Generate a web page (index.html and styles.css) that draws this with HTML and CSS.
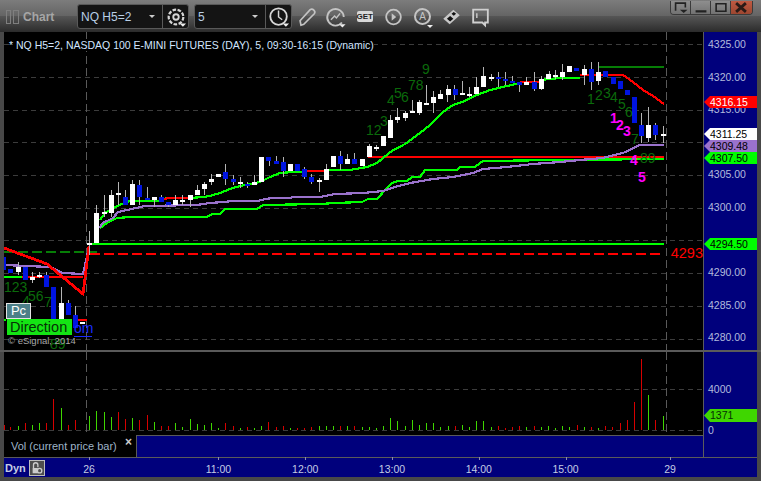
FILE: index.html
```html
<!DOCTYPE html>
<html lang="en">
<head>
<meta charset="utf-8">
<title>Chart</title>
<link rel="stylesheet" href="styles.css">
</head>
<body>
<div class="window">
  <header class="titlebar">
    <span class="grip"></span><span class="grip grip-wide"></span>
    <span class="app-title">Chart</span>
    <div class="combo combo-symbol">
      <span class="combo-value">NQ H5=2</span><span class="caret"></span>
      <span class="combo-btn">
        <svg class="icon" viewBox="0 0 24 24"><circle cx="12" cy="12" r="8" fill="none" stroke="#d6d6d6" stroke-width="2.4" stroke-dasharray="4 1.6"/><circle cx="12" cy="12" r="3" fill="none" stroke="#d6d6d6" stroke-width="2"/><path d="M16 19h7l-3.500 3.500z" fill="#eee"/></svg>
      </span>
    </div>
    <div class="combo combo-interval">
      <span class="combo-value">5</span><span class="caret"></span>
      <span class="combo-btn">
        <svg class="icon" viewBox="0 0 24 24"><circle cx="11.500" cy="11.500" r="9" fill="none" stroke="#d6d6d6" stroke-width="2"/><path d="M11.500 5v7l4 3" fill="none" stroke="#d6d6d6" stroke-width="1.600"/><path d="M16 19h7l-3.500 3.500z" fill="#eee"/></svg>
      </span>
    </div>
    <div class="tools">
      <svg class="tool" viewBox="0 0 24 24"><path d="M6 21l-1-5L16 4q2-1.500 4 .5t.5 4L9 20z" fill="none" stroke="#c4c4c4" stroke-width="1.800"/></svg>
      <svg class="tool" viewBox="0 0 24 24"><path d="M19 18a9 9 0 1 1 2-6" fill="none" stroke="#c4c4c4" stroke-width="2"/><path d="M7 15l4-4 2 2 4-5" fill="none" stroke="#c4c4c4" stroke-width="1.600"/><path d="M16 20h7l-3.500 3.500z" fill="#eee"/></svg>
      <span class="tool get-tool"><span class="get">GET</span></span>
      <svg class="tool" viewBox="0 0 24 24"><circle cx="12" cy="12" r="8" fill="none" stroke="#c4c4c4" stroke-width="2"/><path d="M10 8l5 4-5 4z" fill="#c4c4c4"/></svg>
      <span class="tool a-tool"><span class="a-glyph">A</span><span class="a-caret"></span></span>
      <svg class="tool" viewBox="0 0 24 24"><path d="M3 14L14 4l7 6-11 10z" fill="#c8c8c8"/><path d="M7 14l3.500-3 3.500 3-3.500 3zM12 8.500l2.500-2 2.500 2-2.500 2z" fill="#111"/></svg>
      <svg class="tool" viewBox="0 0 24 24"><path d="M4 4h16v14h-3v3l-3-3H4z" fill="none" stroke="#d0d0d0" stroke-width="2"/><path d="M8 8v5" stroke="#d0d0d0" stroke-width="1.500"/></svg>
    </div>
    <div class="win-buttons">
      <span class="win-btn"><svg viewBox="0 0 16 12"><path d="M3 9V2h9v4" fill="none" stroke="#222" stroke-width="1.500"/><path d="M7 8h7l-3.500 3z" fill="#222"/></svg></span>
      <span class="win-btn"><svg viewBox="0 0 16 12"><path d="M3 9.500h10" stroke="#222" stroke-width="2"/></svg></span>
      <span class="win-btn"><svg viewBox="0 0 16 12"><path d="M3.500 2.500h9v7h-9z" fill="none" stroke="#222" stroke-width="1.500"/></svg></span>
      <span class="win-btn win-close"><svg viewBox="0 0 16 12"><path d="M3.500 2l9 8M12.500 2l-9 8" stroke="#2a1a16" stroke-width="2.600"/></svg></span>
    </div>
  </header>

  <section class="pane price-pane">
    <div class="plot">
      <svg class="canvas" viewBox="4 32 699 318" shape-rendering="crispEdges">
        <path class="grid" d="M4 44.500H703M4 77.500H703M4 110.500H703M4 142.500H703M4 175.500H703M4 208.500H703M4 240.500H703M4 273.500H703M4 306.500H703M4 339.500H703"/>
        <path class="vgrid" d="M86.500 32V350M666.500 32V350"/>
        <path class="line dkgreen dashed-g" d="M4 252H97"/>
        <path class="line dkgreen" d="M598 67H664"/>
        <path class="line green" d="M90 244H664"/>
        <path class="line red dashed-r" d="M90 254H664"/>
        <path class="line red" d="M368 157H664"/>
        <path class="line ma green" d="M100 228L107 223L117 218L130 217L207 217L212 214L220 214L225 209L257 209L263 205L320 204L335 203L362 202L368 199L377 199L387 188L392 183L398 181L407 181L412 177L420 177L425 170L457 170L460 167L475 167L483 161L560 160L664 159"/>
        <path class="line ma purple" d="M4 265L50 267L63 273L83 274L89 247M99 228L103 223L113 218L118 212L127 210L145 206L197 205L210 203L223 202L233 201L258 201L265 199L273 198L290 198L293 197L320 197L335 194L363 193L383 191L395 187L410 183L433 179L453 177L473 173L483 169L507 167L533 164L560 162L580 160L603 158L623 153L640 145L664 145"/>
        <path class="line ma green" d="M4 277H22M4 320H6M100 220L105 213L117 206L130 201L158 201L167 198L190 198L203 197L210 196L220 193L230 189L240 186L260 182L270 177L280 173L293 172L307 172M324 170L350 170L367 167L377 163L383 158L393 150L400 147L408 142L420 133L430 125L443 112L453 105L462 102L477 95L490 90L507 86L520 83M540 80L560 78L580 78"/>
        <path class="line ma red" d="M22 277H83M77 320H87M163 199L170 198H190M307 171H324M520 82H540M580 75L623 75L633 82L643 90L653 96L664 104"/>
        <path class="line red thick" d="M4 248L47 264L83 294L89 246"/>
        <path class="wick" d="M18.500 262V275M32.500 272V283M39.500 272V278M46.500 272V280M61.500 287V325M68.500 300V303M75.500 306V315M89.500 231V255M96.500 205V243M104.500 195V217M111.500 190V217M118.500 182V205M125.500 190V197M132.500 180V184M139.500 180V205M147.500 187V198M154.500 200V207M161.500 195V197M168.500 205V207M175.500 195V200M182.500 195V205M190.500 200V207M197.500 185V190M204.500 182V195M211.500 174V185M225.500 164V185M233.500 175V185M240.500 177V188M247.500 182V188M254.500 175V182M269.500 161V166M276.500 156V161M283.500 157V177M304.500 167V179M311.500 174V184M319.500 178V192M326.500 164V169M340.500 151V170M347.500 154V159M354.500 153V159M369.500 144V146M376.500 145V151M390.500 115V138M397.500 108V123M405.500 111V121M412.500 100V111M419.500 100V115M426.500 85V105M433.500 91V113M440.500 90V94M447.500 85V102M454.500 85V100M462.500 81V93M469.500 87V97M476.500 77V87M483.500 67V76M491.500 74V81M498.500 72V87M505.500 72V85M512.500 76V81M519.500 82V92M526.500 77V82M534.500 72V91M541.500 76V90M549.500 71V74M555.500 70V79M562.500 64V80M584.500 65V85M591.500 62V90M598.500 62V85M641.500 113V143M648.500 107V142M655.500 123V140M663.500 126V143"/>
        <path class="body-white" d="M16 267h5v5h-5zM30 277h5v3h-5zM37 275h5v2h-5zM59 303h5v21h-5zM80 322h5v2h-5zM87 243h5v2h-5zM94 213h5v30h-5zM102 212h5v2h-5zM109 195h5v18h-5zM116 193h5v2h-5zM130 184h5v21h-5zM152 197h5v3h-5zM173 200h5v5h-5zM180 200h5v2h-5zM188 195h5v5h-5zM195 190h5v5h-5zM202 184h5v5h-5zM209 179h5v3h-5zM216 174h5v3h-5zM238 182h5v2h-5zM252 182h5v3h-5zM259 157h5v25h-5zM288 164h5v7h-5zM317 180h5v2h-5zM324 169h5v11h-5zM331 156h5v11h-5zM345 159h5v5h-5zM360 159h5v7h-5zM367 146h5v11h-5zM374 147h5v2h-5zM381 136h5v10h-5zM388 120h5v18h-5zM395 117h5v3h-5zM403 113h5v5h-5zM410 111h5v2h-5zM417 102h5v11h-5zM424 103h5v2h-5zM431 97h5v6h-5zM438 94h5v5h-5zM446 89h5v6h-5zM460 93h5v2h-5zM467 94h5v2h-5zM474 87h5v7h-5zM481 76h5v11h-5zM489 77h5v2h-5zM524 82h5v3h-5zM539 79h5v10h-5zM546 74h5v5h-5zM553 75h5v2h-5zM560 72h5v5h-5zM567 66h5v6h-5zM582 69h5v6h-5zM596 72h5v9h-5zM646 125h5v13h-5zM661 134h5v2h-5z"/>
        <path class="body-blue" d="M4 257h2v13h-2zM8 269h5v4h-5zM23 267h5v13h-5zM44 275h5v12h-5zM51 287h5v36h-5zM66 303h5v12h-5zM73 315h5v13h-5zM123 197h5v8h-5zM137 185h5v12h-5zM145 198h5v2h-5zM159 197h5v5h-5zM166 202h5v3h-5zM223 172h5v7h-5zM231 179h5v3h-5zM245 184h5v2h-5zM266 157h5v4h-5zM274 161h5v3h-5zM281 162h5v9h-5zM295 164h5v7h-5zM302 169h5v8h-5zM309 177h5v5h-5zM338 156h5v8h-5zM352 159h5v5h-5zM453 89h5v6h-5zM496 77h5v2h-5zM503 79h5v2h-5zM510 81h5v2h-5zM517 82h5v3h-5zM532 82h5v7h-5zM574 68h5v3h-5zM589 69h5v13h-5zM603 71h5v6h-5zM611 77h5v7h-5zM618 81h5v8h-5zM625 90h5v5h-5zM632 97h5v26h-5zM639 125h5v11h-5zM653 125h5v10h-5z"/>
        <g class="marks">
          <text x="4" y="292">123</text><text x="22" y="306">4</text><text x="28" y="301">56</text><text x="44" y="307">7</text><text x="50" y="349">89</text>
          <text x="366" y="135">12</text><text x="380" y="126">3</text><text x="387" y="105">4</text><text x="394" y="98">5</text><text x="401" y="102">6</text><text x="408" y="90">78</text><text x="422" y="74">9</text>
          <text x="587" y="104">1</text><text x="595" y="100">2</text><text x="603" y="98">3</text><text x="610" y="102">4</text><text x="618" y="109">5</text><text x="625" y="117">6</text><text x="631" y="144">7</text><text x="640" y="163">89</text>
        </g>
        <g class="marks magenta">
          <text x="610" y="123">1</text><text x="616" y="130">2</text><text x="623" y="136">3</text><text x="630" y="165">4</text><text x="638" y="182">5</text>
        </g>
      </svg>
      <div class="study-title">* NQ H5=2, NASDAQ 100 E-MINI FUTURES (DAY), 5, 09:30-16:15 (Dynamic)</div>
      <span class="last-label">4293</span>
      <div class="study-tags">
        <span class="pc">Pc</span>
        <span class="direction">Direction</span>
        <span class="copyright">© eSignal, 2014</span>
      </div>
      <span class="dyn-mark">om</span>
    </div>
    <div class="axis price-axis">
      <div class="tick-list">
        <span class="tick">4325.00</span>
        <span class="tick">4320.00</span>
        <span class="tick">4315.00</span>
        <span class="tick">4310.00</span>
        <span class="tick">4305.00</span>
        <span class="tick">4300.00</span>
        <span class="tick"></span>
        <span class="tick">4290.00</span>
        <span class="tick">4285.00</span>
        <span class="tick">4280.00</span>
      </div>
      <span class="tag tag-red" style="top:64px">4316.15</span>
      <span class="tag tag-white" style="top:96px">4311.25</span>
      <span class="tag tag-purple" style="top:108px">4309.48</span>
      <span class="tag tag-green" style="top:120px">4307.50</span>
      <span class="tag tag-green" style="top:206px">4294.50</span>
    </div>
  </section>

  <div class="splitter"></div>

  <section class="pane volume-pane">
    <div class="vol-column">
      <div class="plot vol-plot">
        <svg class="canvas" viewBox="4 352 699 83" shape-rendering="crispEdges">
          <path class="grid" d="M4 389.500H703M4 430.500H703"/>
          <path class="vgrid" d="M86.500 352V435M666.500 352V435"/>
          <path class="vol-red" d="M4.500 430V425M10.500 430V427M25.500 430V423M46.500 430V423M53.500 430V399M68.500 430V425M75.500 430V420M118.500 430V412M125.500 430V419M139.500 430V420M147.500 430V415M161.500 430V426M168.500 430V426M225.500 430V423M233.500 430V426M247.500 430V427M268.500 430V422M276.500 430V427M283.500 430V426M297.500 430V428M304.500 430V428M311.500 430V427M340.500 430V426M354.500 430V426M455.500 430V426M498.500 430V426M505.500 430V428M512.500 430V427M519.500 430V426M534.500 430V426M577.500 430V425M591.500 430V427M605.500 430V426M612.500 430V427M620.500 430V423M627.500 430V420M634.500 430V402M641.500 430V359M655.500 430V420"/>
          <path class="vol-green" d="M18.500 430V426M32.500 430V425M39.500 430V423M61.500 430V408M89.500 430V416M96.500 430V411M104.500 430V412M111.500 430V417M132.500 430V418M154.500 430V422M175.500 430V423M182.500 430V427M190.500 430V419M197.500 430V424M204.500 430V425M211.500 430V423M218.500 430V428M240.500 430V428M254.500 430V428M261.500 430V426M290.500 430V428M319.500 430V426M326.500 430V426M333.500 430V426M347.500 430V426M362.500 430V427M369.500 430V427M376.500 430V428M383.500 430V426M390.500 430V418M397.500 430V421M405.500 430V426M412.500 430V420M419.500 430V425M426.500 430V423M433.500 430V423M440.500 430V427M448.500 430V426M462.500 430V425M469.500 430V427M476.500 430V421M483.500 430V421M491.500 430V427M526.500 430V427M541.500 430V427M548.500 430V426M555.500 430V428M562.500 430V426M569.500 430V427M584.500 430V427M598.500 430V428M648.500 430V395M663.500 430V416"/>
        </svg>
      </div>
    </div>
    <div class="axis vol-axis">
      <span class="vol-tick">4000</span>
      <span class="vol-tick vol-zero">0</span>
      <span class="tag tag-vol" style="top:57px">1371</span>
    </div>
  </section>

  <section class="legend-row">
    <div class="legend">
      <span class="legend-name">Vol (current price bar)</span>
      <span class="legend-close">×</span>
    </div>
    <div class="legend-fill"></div>
    <div class="legend-axis"></div>
  </section>

  <footer class="time-axis">
    <span class="dyn">Dyn</span>
    <span class="lock">
      <svg viewBox="0 0 16 16"><path d="M4 8V4.500a2.500 2.500 0 0 1 5 0V7" fill="none" stroke="#ccc" stroke-width="1.500"/><path d="M3 8h6v6H3z" fill="#ccc"/><circle cx="11" cy="11" r="2.500" fill="none" stroke="#ccc" stroke-width="1.500"/></svg>
    </span>
    <div class="time-labels">
      <span class="time time-26">26</span>
      <span class="time">11:00</span>
      <span class="time">12:00</span>
      <span class="time">13:00</span>
      <span class="time">14:00</span>
      <span class="time">15:00</span>
      <span class="time time-29">29</span>
    </div>
  </footer>
</div>
</body>
</html>
```
FILE: styles.css
```css
* { box-sizing: border-box; }
html, body { margin: 0; padding: 0; background: #000; }
body { font-family: "Liberation Sans", Arial, sans-serif; }

.window {
  width: 761px;
  height: 481px;
  background: #484848;
  display: flex;
  flex-direction: column;
  padding-bottom: 4px;
  overflow: hidden;
}

/* title bar */
.titlebar {
  height: 32px;
  flex: none;
  display: flex;
  align-items: center;
  padding-left: 6px;
  padding-top: 1px;
  background: linear-gradient(#7c7c7c 0, #646464 16px, #565656 16px, #2b2b2b 32px);
}
.grip { width: 5px; height: 14px; border: 1px solid #7f7f7f; margin-right: 2px; }
.grip-wide { width: 6px; margin-right: 4px; }
.app-title { width: 54px; color: #a6a6a6; font-size: 12px; font-weight: bold; }
.combo {
  height: 25px;
  display: flex;
  align-items: center;
  background: #141414;
  border: 1px solid #595959;
  border-radius: 3px;
  margin-right: 5px;
  color: #b9cfe6;
  font-size: 12px;
}
.combo-symbol { width: 112px; }
.combo-interval { width: 98px; margin-right: 0; }
.combo-value { padding-left: 3px; flex: 1; }
.caret {
  width: 0; height: 0;
  border: 3px solid transparent;
  border-top: 3px solid #ccc;
  border-bottom: 0;
  margin-right: 7px;
}
.combo-btn {
  width: 26px;
  height: 23px;
  border-left: 1px solid #595959;
  display: flex;
  align-items: center;
  justify-content: center;
}
.icon { width: 22px; height: 22px; }
.tools { display: flex; align-items: center; }
.tool { width: 29px; height: 22px; display: flex; align-items: center; justify-content: center; flex: none; position: relative; }
.get {
  display: block;
  width: 16px;
  height: 11px;
  background: #d8d8d8;
  color: #222;
  font-size: 8px;
  font-weight: bold;
  line-height: 11px;
  text-align: center;
  border-radius: 2px;
}
.a-tool .a-glyph {
  width: 17px;
  height: 17px;
  border: 2px solid #c4c4c4;
  border-radius: 50%;
  color: #c4c4c4;
  font-size: 10px;
  line-height: 13px;
  text-align: center;
}
.a-caret {
  position: absolute;
  right: 4px;
  bottom: 0;
  border: 3px solid transparent;
  border-top: 3px solid #eee;
  border-bottom: 0;
}
.win-buttons {
  margin-left: auto;
  margin-right: 8px;
  align-self: flex-start;
  display: flex;
  height: 14px;
  border: 1px solid #3a3a3a;
  border-top: 0;
  border-radius: 0 0 4px 4px;
  overflow: hidden;
}
.win-btn {
  width: 20px;
  border-right: 1px solid #3a3a3a;
  background: linear-gradient(#8e8e8e, #727272);
}
.win-btn svg { display: block; width: 20px; height: 13px; }
.win-close { width: 21px; border-right: 0; background: linear-gradient(#c05a42, #9c4630); }

/* panes */
.pane { display: flex; margin: 0 4px; flex: none; }
.price-pane { height: 318px; }
.volume-pane { height: 83px; }
.plot { width: 699px; height: 100%; background: #000; position: relative; flex: none; overflow: hidden; }
.canvas { display: block; width: 100%; height: 100%; }
.splitter { height: 2px; flex: none; background: #5a5a5a; }
.axis { width: 54px; background: #00007c; border-left: 1px solid #5c5c5c; position: relative; flex: none; }

/* chart strokes */
.grid { stroke: #3c3c3c; stroke-width: 1; stroke-dasharray: 5 4; fill: none; }
.vgrid { stroke: #5a5a5a; stroke-width: 1; stroke-dasharray: 8 4; fill: none; }
.line { fill: none; stroke-width: 2; shape-rendering: crispEdges; }
.ma { stroke-width: 2.200; }
.green { stroke: #00ff00; }
.red { stroke: #ff0000; }
.purple { stroke: #9a72cc; }
.dkgreen { stroke: #067d06; }
.dashed-g { stroke-dasharray: 10 4; }
.dashed-r { stroke-dasharray: 10 4; }
.thick { stroke-width: 2.800; }
.wick { stroke: #b4b4b4; stroke-width: 1; fill: none; }
.body-white { fill: #fff; }
.body-blue { fill: #0014e0; }
.marks { fill: #0b6a0b; font-family: "Liberation Sans", Arial, sans-serif; font-size: 14px; }
.marks.magenta { fill: #ff00ff; font-weight: bold; font-size: 14px; }
.vol-red { stroke: #d60000; stroke-width: 1; fill: none; }
.vol-green { stroke: #3fd600; stroke-width: 1; fill: none; }

/* overlays on the price plot */
.study-title {
  position: absolute;
  left: 5px;
  top: 7px;
  color: #d2e6ff;
  font-size: 10.500px;
  line-height: 12px;
  white-space: nowrap;
  background: #000;
}
.last-label {
  position: absolute;
  right: 0;
  top: 213px;
  color: #ff0000;
  font-size: 14.500px;
  line-height: 16px;
}
.study-tags {
  position: absolute;
  left: 2px;
  top: 271px;
  display: flex;
  flex-direction: column;
  align-items: flex-start;
}
.pc {
  width: 25px;
  height: 16px;
  background: #4c7f88;
  border: 1px solid #e4e4e4;
  color: #fff;
  font-size: 13px;
  line-height: 14px;
  text-align: center;
}
.direction {
  width: 65px;
  height: 16px;
  margin-left: 1px;
  background: #14e414;
  color: #063006;
  font-size: 14.500px;
  line-height: 16px;
  padding-left: 3px;
  white-space: nowrap;
}
.copyright { color: #a8a8a8; font-size: 9.500px; line-height: 12px; margin-left: 2px; }
.dyn-mark {
  position: absolute;
  left: 70px;
  top: 289px;
  width: 18px;
  color: #1a2cff;
  font-size: 14px;
  line-height: 15px;
  border-bottom: 1px solid #1a2cff;
  text-align: right;
}

/* axes */
.tick-list { display: flex; flex-direction: column; padding-top: 6px; }
.tick { height: 32.600px; line-height: 12px; padding-left: 4px; color: #b2bbdc; font-size: 10.500px; }
.tag {
  position: absolute;
  left: 0;
  width: 53px;
  height: 12px;
  padding-left: 6px;
  font-size: 10.500px;
  line-height: 12px;
  color: #000;
  clip-path: polygon(0 50%, 6px 0, 100% 0, 100% 100%, 6px 100%);
}
.tag-red { background: #ff0000; color: #fff; }
.tag-white { background: #fff; }
.tag-purple { background: #9a72cc; }
.tag-green { background: #00ff00; }
.tag-vol { background: #3fd600; height: 13px; color: #063006; line-height: 13px; }
.vol-tick { position: absolute; left: 4px; top: 31px; color: #b2bbdc; font-size: 10.500px; line-height: 12px; }
.vol-zero { top: 72px; }

/* legend strip */
.legend-row { display: flex; height: 22px; margin: 0 4px; flex: none; border-top: 1px solid transparent; }
.legend { width: 132px; background: #000; position: relative; flex: none; margin-top: -1px; }
.legend-name { position: absolute; left: 7px; top: 5px; color: #9fb4c8; font-size: 11px; line-height: 12px; white-space: nowrap; }
.legend-close { position: absolute; left: 121px; top: 1px; color: #ccc; font-size: 12px; font-weight: bold; line-height: 12px; }
.legend-fill { flex: 1; background: #00007c; border-top: 1px solid #5a5a5a; border-left: 1px solid #5a5a5a; margin-top: -1px; }
.legend-axis { width: 54px; flex: none; background: #00007c; border-left: 1px solid #5c5c5c; margin-top: -1px; }

/* time axis */
.time-axis {
  height: 20px;
  margin: 0 4px;
  flex: none;
  background: #00007c;
  display: flex;
  align-items: center;
  position: relative;
  border-top: 1px solid #5a5a5a;
  color: #c4cce4;
  font-size: 10.500px;
}
.time-axis::after {
  content: "";
  position: absolute;
  right: 54px;
  top: -1px;
  width: 1px;
  height: 1px;
  background: #5c5c5c;
}
.dyn { margin-left: 1px; width: 24px; font-size: 11px; font-weight: bold; }
.lock { width: 16px; height: 16px; border: 1px solid #bdbdbd; background: #4e4e4e; display: block; flex: none; }
.lock svg { display: block; width: 14px; height: 14px; }
.time-labels { margin-left: 32px; width: 620px; display: flex; align-items: center; position: relative; }
.time { width: 86.800px; text-align: center; flex: none; position: relative; padding-top: 3px; }
.time::before {
  content: "";
  position: absolute;
  left: 50%;
  top: -3px;
  width: 1px;
  height: 3px;
  background: #8a8ab0;
}
.time-26 { width: 24px; margin-right: 74px; }
.time-29 { width: 20px; margin-left: 51px; }
```
